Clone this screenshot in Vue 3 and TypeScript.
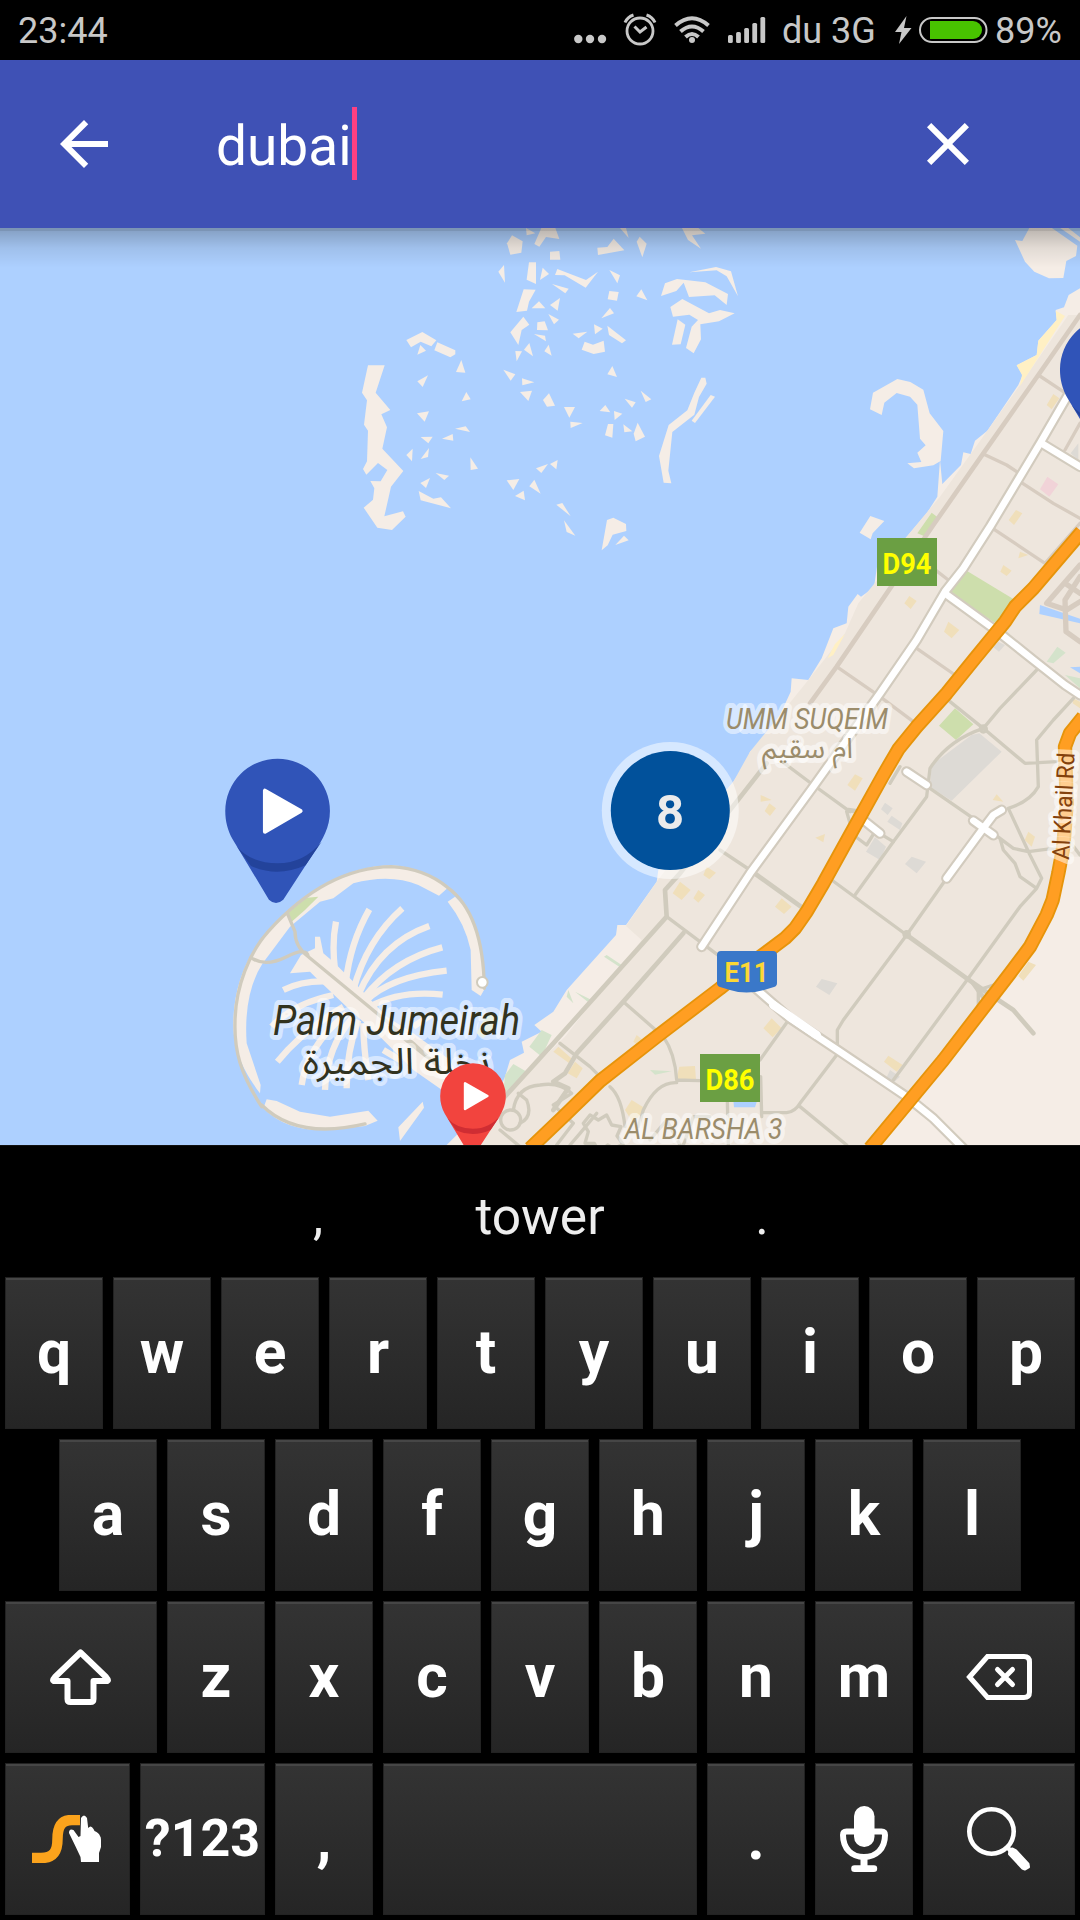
<script setup lang="ts">
interface Key {
  label?: string
  icon?: 'shift' | 'backspace' | 'swype' | 'mic' | 'search'
  size?: 'wide' | 'medium' | 'space'
  small?: boolean
}

const letters = (s: string): Key[] => s.split('').map((label) => ({ label }))

const rows: Key[][] = [
  letters('qwertyuiop'),
  letters('asdfghjkl'),
  [{ icon: 'shift', size: 'wide' }, ...letters('zxcvbnm'), { icon: 'backspace', size: 'wide' }],
  [
    { icon: 'swype', size: 'medium' },
    { label: '?123', size: 'medium', small: true },
    { label: ',' },
    { size: 'space' },
    { label: '.' },
    { icon: 'mic' },
    { icon: 'search', size: 'wide' },
  ],
]

const suggestions = [',', 'tower', '.']

// Small islets of the archipelago, one point list each
const islets: string[] = [
  '516,46 548,64 544,98 511,104 501,70', '558,24 586,40 560,46', '604,24 646,24 658,57 618,51 598,80 583,72',
  '630,95 658,93 661,119 630,119', '492,135 495,188 475,155', '567,127 588,127 588,192 560,179',
  '608,143 627,162 600,180', '652,147 738,180 774,155 737,203 674,166 645,165', '772,83 802,81 821,56 853,91 774,105',
  '840,24 858,24 866,54', '899,50 920,71 907,112 890,65', '1026,24 1075,24 1096,41 1056,46 1083,86 1044,60',
  '808,150 840,166 832,190', '636,192 686,206 676,220', '551,208 587,209 567,245 561,272 529,276',
  '597,244 616,265 575,265', '660,234 653,272 630,255', '808,213 836,216 831,242 803,238', '904,208 922,241 889,229',
  '810,264 822,280 784,295', '625,282 657,299 642,313', '550,290 568,314 545,330 535,375 511,337',
  '592,307 614,304 624,331 591,330', '582,342 615,347 618,364', '762,313 788,326 765,343', '802,317 858,361 846,370 807,345',
  '698,341 742,335 716,355', '734,365 759,374 791,362 795,395 761,402 725,389', '568,369 579,409 552,389',
  '526,393 546,394 530,424', '626,374 635,407 613,394', '490,449 526,463 512,482', '546,475 583,487 547,496',
  '540,516 576,512 565,543', '627,520 645,557 621,560 609,540', '817,438 831,471 802,463', '672,561 705,561 688,593',
  '691,605 728,609 692,624', '796,555 811,577 779,573', '822,573 847,581 824,600', '854,536 887,547 876,563',
  '902,512 934,538 917,546', '804,612 820,612 817,653 795,646', '850,613 877,634 853,637', '893,608 915,650 887,664 881,641',
  '653,720 649,748 630,732', '624,732 604,759 588,745', '500,781 538,777 520,810', '583,779 602,821 568,799',
  '551,812 555,841 525,828', '649,854 667,849 692,889', '672,901 706,947 680,936', '801,900 820,893 858,912 859,933 818,944 803,976 785,991',
  '852,947 866,961 826,975', '199,360 247,336 289,361 274,379 242,365 213,382', '292,367 346,391 346,403 331,412 283,391',
  '241,375 258,392 232,404', '364,420 376,458 348,456', '264,466 248,501 232,484', '379,516 392,538 365,544',
  '231,580 267,574 254,605', '242,651 278,650 265,670', '338,642 340,662 306,656', '345,626 377,619 390,636',
  '218,686 216,724 199,705', '267,684 264,711 242,717', '391,712 414,746 392,750', '270,774 258,804 241,789',
  '287,759 327,767 313,780', '236,813 280,836 303,832 333,865 242,841',
  '84,436 134,436 107,518 151,570 124,583 141,622 127,686 190,753 153,800 133,889 189,874 197,890 156,930 112,923 71,863 99,839 103,805 91,783 122,784 142,750 114,729 79,764 69,747 81,724 84,632 72,614 81,541 66,518',
  '975,190 1011,177 1096,187 1164,222 1160,255 1124,226 1047,231 1031,188 1009,213 963,228',
  '1048,157 1128,141 1173,154 1194,229 1160,169 1130,151', '991,261 1027,237 1107,280 1140,270 1184,280 1137,304 1081,313 1083,358 1061,400 1038,384 1055,320 1074,300 1048,284 999,290',
  '1013,298 1036,314 1022,373 996,374', '1084,473 1096,473 1100,491 1077,531 1063,584 997,636 985,752 994,790 971,788 957,708 986,615 1042,571 1063,518',
  '1112,525 1125,530 1065,609 1055,602',
]
</script>

<template>
  <div class="phone">
    <header class="status">
      <span class="clock">23:44</span>
      <svg class="dots" width="34" height="60" viewBox="573 0 34 60"><circle cx="578.3" cy="39" r="4.2" /><circle cx="590" cy="39" r="4.2" /><circle cx="602" cy="39" r="4.2" /></svg>
      <svg class="alarm" width="34" height="60" viewBox="623 0 34 60" fill="none" stroke="#c8c8c8">
        <circle cx="640" cy="31" r="13" stroke-width="2.8" /><path d="M634.500 26.500l5.500 5.500 6.500-5" stroke-width="3" /><path d="M625 22.500q2.500-5.500 8.500-7.500M655 22.500q-2.500-5.500-8.500-7.500" stroke-width="3" />
      </svg>
      <svg class="wifi" width="38" height="60" viewBox="673 0 38 60" fill="none" stroke="#c8c8c8" stroke-width="4">
        <path d="M675.500 25.500q16.500-14.500 33 0M680.500 31.500q11.500-10 23 0M685.500 37q6.500-6 13 0" /><circle cx="692" cy="40" r="3" fill="#c8c8c8" stroke="none" />
      </svg>
      <svg class="signal" width="38" height="60" viewBox="728 0 38 60"><rect v-for="(h, i) in [8, 11, 15, 20, 26]" :key="i" :x="728 + i * 8.1" :y="43 - h" width="4.800" :height="h" rx="1.500" /></svg>
      <span class="carrier">du 3G</span>
      <svg class="bolt" width="18" height="60" viewBox="894 0 18 60"><path d="M906.500 16L895 32h6.500l-2.500 12L911.500 28H904z" /></svg>
      <svg class="battery" width="70" height="60" viewBox="918 0 70 60"><rect x="920" y="18" width="66.500" height="24" rx="12" fill="none" stroke="#c8c8c8" stroke-width="2" /><path d="M930 21h43a9 9 0 0 1 0 18h-43z" fill="#48c400" /></svg>
      <span class="percent">89%</span>
    </header>

    <div class="search-bar">
      <svg width="72" height="72" viewBox="0 0 24 24" fill="#fff"><path d="M20 11H7.830l5.590-5.590L12 4l-8 8 8 8 1.410-1.410L7.830 13H20z" /></svg>
      <div class="query"><span>dubai</span><i class="caret"></i></div>
      <svg width="72" height="72" viewBox="0 0 24 24" fill="#fff"><path d="M19 6.410L17.590 5 12 10.590 6.410 5 5 6.410 10.590 12 5 17.590 6.410 19 12 13.410 17.590 19 19 17.590 13.410 12z" /></svg>
    </div>

    <main class="map">
      <svg class="canvas" width="1080" height="917" viewBox="0 228 1080 917">
        <defs>
          <g id="pin">
            <path d="M-157 0A157 157 0 0 1 157 0C157 50 135 86 110 123L17 266Q-5 286-26 266L-135 85C-150 58-157 30-157 0z" />
          </g>
        </defs>
        <!-- The World islands -->
        <g transform="translate(340 220) scale(.33333)" class="sand"><polygon v-for="p in islets" :key="p" :points="p" /></g>

        <!-- Mainland -->
        <g transform="translate(700 660) scale(.33333)">
          <g class="sand">
            <path d="M1140-1115L1106-1095 1092-1058 1067-1050 1070-1020 1015-958 1010-915 950-884 968-855 955-825 862-688 825-658 812-618 790-623 783-585 727-528 720-600 712-490 680-440 620-370 531-280 522-218 483-190 473-198 445-160 440-110 400-95 365-5 325 60 275 55 272 95 240 165 195 235 150 275 140 305 100 365-125 630-130 665-222 795-248 795-252 825-400 990-440 1055-497 1095-475 1115-535 1145-528 1178-570 1200-585 1250-620 1330-730 1425-765 1460H1140z" />
            <path d="M990-1300L967-1257 945-1260 975-1195 1003-1165 1047-1145 1090-1146 1099-1197 1128-1212 1132-1243 1050-1300zM1075-1300L1140-1255V-1268L1100-1300z" />
            <path d="M519-802L592-843 631-834 670-811 689-740 730-687 722-597 700-584 642-575 622-590 664-594 652-622 677-644 660-664 652-766 630-790 590-801 553-772 545-735 510-752zM511-432L553-417 518-380 512-362 479-382z" />
          </g>
          <path fill="#eee6dd" d="M1140-1035H1105L960-825 862-688 720-490 620-370 540-250 475-170 435-80 325 60 240 165 150 275 100 365-50 560-130 665-222 798-175 840-405 1130-580 1300-640 1390-700 1460H530L930 940 1058 720 1098 590 1140 590z" />
          <g fill="#fff0c4"><path d="M1067-1048L1095-1032 960-822 966-855 950-884 1010-915 1015-958 1070-1020zM435-78L400-15 383-5 405-48z" /></g>
          <g fill="#cddeac"><path d="M800-268L945-180 895-105 750-200zM695-442L715-427 677-370 652-380zM765 145L820 193 768 240 717 197z" /></g>
          <g fill="#d4e3cb"><path d="M1072-40L1097-22 1060 10 1040 5zM1095 45L1140 55V85zM-280 885L-235 915-240 922-288 890zM-395 990L-380 1030-400 1010zM-375 995L-325 1020-335 1027zM-475 1110L-445 1125-475 1190-512 1160zM-560 1212L-520 1235-560 1285-590 1300-585 1245zM-150 1230L-85 1234-135 1244z" /></g>
          <g fill="#add0ff"><path d="M1020-165L1140-124V-110L1018-138zM1110 22L1140 20V40zM100 1320H172L165 1342H102z" /></g>
          <g fill="#dddad5"><path d="M815 225L838 220 905 275 755 422 690 380 695 315zM555 428L578 445 563 465 543 448zM575 467L607 490 600 510 562 485zM525 532L558 560 540 600 498 575zM635 590L678 605 650 640 615 612zM365 957L412 970 388 1005 348 980zM1135-650V-600L1112-620zM895-55L915-45 897-25 880-38zM570 1230L600 1250 580 1268 560 1252z" /></g>
          <g fill="#f1d3d8"><path d="M1042-550L1075-527 1048-490 1020-512z" /></g>
          <g fill="#f0dfba"><path d="M1060-798L1078-785 1055-752 1040-765zM948-450L967-440 942-405 926-420zM960-325L985-315 955-305zM910-285L935-268 920-252 901-265zM628-192L650-177 632-153 613-170zM745-115L778-90 755-65 732-85zM465 343L488 355 465 392 442 375zM182 405L215 420 182 425zM208 430L228 445 210 468 194 453zM375 522L370 547 346 533zM890 403L910 425 878 420zM985 515L1005 530 995 560 974 540zM1120 115L1140 125V145L1118 130zM20 620L48 638 28 658 10 645zM245 715L275 740 252 762 225 740zM-60 665L-28 690-55 720-82 700zM-5 690L15 705-5 728-20 715zM215 1075L245 1105 218 1132 190 1105zM565 1187L608 1215 590 1235 552 1205zM985 905L1008 915 970 962 955 948zM-62 1220L-15 1218-12 1260-72 1260zM-205 1320L-165 1345-200 1390-225 1350zM-190 1125L-165 1145-180 1160-200 1145zM-425 1160L-380 1200-385 1215-440 1175zM-375 1205L-352 1225-370 1255-397 1240z" /></g>

          <g class="minor north">
            <path stroke-width="14" d="M1140-1035L1015-855 850-620 700-405 560-200 410 20 330 130" />
            <path d="M1015-855L1090-805M850-618L920-585 950-565M960-535L1060-470 1140-425M870-400L990-320 1035-290 1140-410M700-275L745-240M1140-710L1095-630M410 20L540 110 640 185M650-35L765 45" />
            <path stroke-width="16" d="M1140-285L1040-170 1100-150 1140-175M1140-250L1095-180 1098-85 1140-55M1095-230L1140-200" />
          </g>
          <g class="minor">
            <path stroke-width="14" d="M200 310L110 425-60 640-105 690-100 770-440 1150-640 1370-690 1455" />
            <path stroke-width="14" d="M-50 820L-120 900-230 1025-370 1180-405 1240-440 1265-395 1285-440 1350" />
            <path d="M-100 770L60 890M60 570L150 630M240 300L340 375 450 455M530 515L580 545 465 705M440 455L460 525 500 555 525 515M600 320L570 370" />
            <path stroke-width="14" d="M150 630L310 745M820 970L870 1040M445 450L475 455" />
            <path d="M750 125L850 205 975 310 1070 305M1010 30L900 145 850 205Q745 240 690 325L680 410 580 545M690 385L820 475 940 565 985 575 1060 565 1110 545 1140 585M1120 115L1060 180 1010 240 1015 380Q990 425 925 445L990 585 1025 655 1010 685 960 650 945 610 910 570 900 535M1010 685L960 740 805 955 580 1260M395 660L620 825" />
            <path stroke-width="14" d="M620 825L800 955 850 990 940 1050 1000 1120" />
            <path d="M835 1040V990L880 975M740 655L620 825 430 1080 412 1110V1170M410 1185L300 1330Q285 1355 260 1358H190M300 1340L440 1455M262 1085L180 1200M82 1320L85 1455M182 1250L185 1370M-230 1025L-110 1130Q-75 1180-70 1260L0 1262M-70 1268Q-130 1265-170 1350L-185 1400M-270 1280Q-235 1310-225 1400M-420 1150L-330 1220-300 1250" />
            <circle cx="-568" cy="1380" r="30" /><circle cx="620" cy="823" r="8" /><circle cx="850" cy="207" r="9" />
            <path d="M-560 1350Q-550 1280-480 1275-420 1265-385 1300L-440 1335-380 1390-430 1455M-600 1410L-540 1460M-540 1390Q-500 1370-520 1320L-545 1300M-330 1365l25 15 25-15 15 30 28 5-12 28 18 25-28 12-18-10-25 20-15-25-28 0 10-35-15-25zM-310 1360L-360 1420-390 1455M-150 1440L-100 1380-60 1455M-50 1455L-20 1370H30" />
          </g>
          <g class="casing">
            <path d="M1110-805L1020-650 960-550 870-400 790-275 735-205 650-60 540 100 340 380 150 640 5 860" />
            <path d="M1025-650L1140-580M735-200L900-80 1000 0 1095 75 1140 105M620 335L680 375M490 480L540 520M820 482L880 525M740 655L850 505 880 465 905 450M150 970L270 1075 420 1175 620 1310 700 1375 790 1465" />
          </g>
          <g class="white">
            <path d="M1110-805L1020-650 960-550 870-400 790-275 735-205 650-60 540 100 340 380 150 640 5 860" />
            <path d="M1025-650L1140-580M735-200L900-80 1000 0 1095 75 1140 105M620 335L680 375M490 480L540 520M820 482L880 525M740 655L850 505 880 465 905 450M150 970L270 1075 420 1175 620 1310 700 1375 790 1465" />
            <path stroke-width="26" d="M220 1035L350 1125" />
          </g>
          <g class="highway">
            <path class="edge" d="M1145-385L1000-215 945-160 915-115 825-5 740 100 650 200 595 268 550 345 450 525 370 670 320 755 285 805 255 835 195 880 140 920 60 985-130 1130-300 1263-410 1370-510 1465" />
            <path class="edge" d="M1150 170L1110 220 1095 260 1100 430 1090 560 1075 640 1058 720 1040 765 990 860 930 940 730 1200 510 1465" />
            <path d="M1145-385L1000-215 945-160 915-115 825-5 740 100 650 200 595 268 550 345 450 525 370 670 320 755 285 805 255 835 195 880 140 920 60 985-130 1130-300 1263-410 1370-510 1465" />
            <path d="M1150 170L1110 220 1095 260 1100 430 1090 560 1075 640 1058 720 1040 765 990 860 930 940 730 1200 510 1465" />
          </g>
        </g>

        <!-- Palm Jumeirah -->
        <g transform="translate(200 740) scale(.33333)">
          <g class="sand">
            <path d="M180 1060C120 980 100 920 100 850C100 740 145 635 205 572C310 455 430 380 575 376Q670 382 742 445L717 467 655 435Q570 400 460 430L400 475 360 485 270 560Q240 600 188 670 130 760 140 910L182 1035z" />
            <path d="M765 470Q850 540 855 745L842 768 815 750 812 630Q795 550 743 485zM200 1078L230 1083 300 1115 390 1130 505 1112 533 1142 495 1158 380 1170Q260 1175 190 1105zM668 1085L672 1103 600 1203 595 1162z" />
            <path d="M270 700L303 645 345 625V590H360L370 640 400 665 470 735 560 830 640 880 750 960 800 1060 740 1060 640 990 540 890 450 810 345 710 330 695z" />
          </g>
          <g class="fronds">
            <path d="M408 545Q395 610 405 690M508 508Q450 610 437 730M607 505Q500 600 460 750M688 558Q540 610 475 765M727 622Q580 660 490 775M740 692Q570 710 495 785M728 764Q600 750 510 800M250 750Q310 720 390 725M215 860Q280 790 400 765M232 965Q310 870 430 800M305 1035Q320 920 440 820M375 1050Q380 920 460 830M440 1045Q440 930 475 840M505 1020Q490 920 490 850M640 860L700 820M550 930L600 960" />
          </g>
          <path fill="#cddeac" d="M320 473L355 470 315 510 275 545 260 520z" />
          <g class="minor">
            <path d="M185 1100C120 1000 103 930 105 850C105 740 150 635 205 574C310 458 430 382 575 380Q675 386 742 442Q850 520 853 745M185 1095Q290 1200 495 1152M160 657Q200 680 260 650T325 650M262 520L285 575Q285 620 325 650M325 650L640 910 720 985M580 870L680 950" />
          </g>
          <circle cx="847" cy="727" r="16" fill="#fff" stroke="#d0cbbd" stroke-width="6" />
          <path fill="#d4e3cb" d="M860 820L910 830 850 895 830 880zM830 910L820 905" />
          <path stroke="#fff" stroke-width="22" stroke-linecap="round" d="M575 888L620 890" opacity=".8" />
        </g>

        <g class="labels">
          <text class="area" x="726" y="729" textLength="162" lengthAdjust="spacingAndGlyphs">UMM SUQEIM</text>
          <text class="area arabic" x="762" y="758" textLength="91" lengthAdjust="spacingAndGlyphs">ام سقيم</text>
          <text class="area" x="624.500" y="1139" textLength="158" lengthAdjust="spacingAndGlyphs">AL BARSHA 3</text>
          <text class="palm" x="273" y="1035" textLength="247" lengthAdjust="spacingAndGlyphs">Palm Jumeirah</text>
          <text class="palm arabic" x="303" y="1074" textLength="187" lengthAdjust="spacingAndGlyphs">نخلة الجميرة</text>
          <text class="road" transform="translate(1069 860) rotate(-87)" textLength="107" lengthAdjust="spacingAndGlyphs">Al Khail Rd</text>
        </g>

        <g class="shields">
          <rect x="877" y="538" width="60" height="48" fill="#6b9f43" /><text x="907" y="574" textLength="49" lengthAdjust="spacingAndGlyphs">D94</text>
          <rect x="700" y="1054" width="60" height="48" fill="#6b9f43" /><text x="730" y="1090" textLength="49" lengthAdjust="spacingAndGlyphs">D86</text>
          <path fill="#3a78c9" d="M721 951h52q4 0 4 4v28q0 3-3 4l-10 3q-18 5-34 0l-10-3q-3-1-3-4v-28q0-4 4-4z" /><text class="e11" x="746.500" y="981.500" textLength="44" lengthAdjust="spacingAndGlyphs">E11</text>
        </g>

        <circle cx="670.300" cy="810.500" r="68.500" fill="#fff" fill-opacity=".5" />
        <circle cx="670.300" cy="810.500" r="59.500" fill="#01519b" />
        <text class="count" x="670" y="829">8</text>

        <g transform="translate(277.600 811) scale(.33333)">
          <use href="#pin" fill="#3054b8" />
          <path fill="#23439b" d="M-122 107Q-80 156 0 157 80 156 132 92L84 163Q0 200-80 165z" />
          <path fill="#fff" stroke="#fff" stroke-width="12" stroke-linejoin="round" d="M-38-61V62L69 0z" />
        </g>
        <g transform="translate(1112.300 369.500) scale(.33333)"><use href="#pin" fill="#3054b8" /><path fill="#23439b" d="M-122 107Q-80 156 0 157 80 156 132 92L84 163Q0 200-80 165z" /></g>
        <g transform="translate(473 1096) scale(.209)">
          <use href="#pin" fill="#f2443e" />
          <path fill="#cf2d33" d="M-122 107Q-80 156 0 157 80 156 132 92L84 163Q0 200-80 165z" />
          <path fill="#fff" stroke="#fff" stroke-width="12" stroke-linejoin="round" d="M-38-61V62L69 0z" />
        </g>
      </svg>
      <div class="shade"></div>
    </main>

    <section class="keyboard">
      <div class="suggestions"><span v-for="s in suggestions" :key="s">{{ s }}</span></div>
      <div v-for="(row, r) in rows" :key="r" class="row">
        <div v-for="(k, i) in row" :key="i" class="key" :class="[k.size, { small: k.small }]">
          <template v-if="k.label">{{ k.label }}</template>
          <svg v-else-if="k.icon === 'shift'" width="62" height="56" viewBox="0 0 62 56" fill="none" stroke="#fff" stroke-width="6" stroke-linejoin="round"><path d="M30.500 3.500L56 28Q60 32.500 56 32H43.500V50q0 3-3 3h-20q-3 0-3-3V32H5Q1 32.500 5 28z" /></svg>
          <svg v-else-if="k.icon === 'backspace'" width="66" height="46" fill="none" stroke="#fff" stroke-width="5"><path d="M3.500 23L21.500 2.500H58q5.500 0 5.500 5.500v30q0 5.500-5.500 5.500H21.500z" /><path d="M31.500 15.500l15 15m0-15l-15 15" stroke-linecap="round" /></svg>
          <svg v-else-if="k.icon === 'swype'" width="71" height="48"><path d="M0 43H9C22 43 25.500 36 25.500 24S29 5 40 5h8" fill="none" stroke="#fba31c" stroke-width="10.500" /><path fill="#fff" d="M49 3q3-5 6 0l1.200 10Q59 9.500 61.500 14l1 2Q67 18 68 21q1 1 1 4v7l-2 6v9H49l-.5-5-4.700-10L37 18q0-5 4.500-3l5 7 2-1z" /></svg>
          <svg v-else-if="k.icon === 'mic'" width="48" height="66" fill="#fff"><rect x="14" width="20.500" height="41" rx="10.200" /><path d="M15 25.500H6.500Q3 25.500 3 29C3 43 12 51 24 51s21-8 21-22q0-3.500-3.500-3.500H33" fill="none" stroke="#fff" stroke-width="6" /><path d="M20.500 51h7v9h-7z" /><rect x="11.200" y="59.300" width="26" height="6.700" rx="3.300" /></svg>
          <svg v-else-if="k.icon === 'search'" width="64" height="64" fill="none" stroke="#fff"><circle cx="24.500" cy="24.500" r="22.200" stroke-width="4.600" /><path d="M39 39l6 6" stroke-width="4.500" /><path d="M45.500 42L48.500 43.500 61 57 61.500 60 58 62 55.500 61 42.500 47 43 43z" fill="#fff" stroke-width="3" stroke-linejoin="round" /></svg>
        </div>
      </div>
    </section>
  </div>
</template>

<style>
body {
  margin: 0;
  background: #000;
}
</style>

<style scoped>
.phone {
  width: 1080px;
  height: 1920px;
  display: flex;
  flex-direction: column;
  overflow: hidden;
  background: #000;
  font-family: Roboto, "Noto Sans", sans-serif;
}
svg {
  display: block;
  flex: none;
}
.status {
  height: 60px;
  display: flex;
  align-items: center;
  color: #c8c8c8;
  fill: #c8c8c8;
  font-size: 36px;
  line-height: 60px;
}
.status span { padding-top: 2px; }
.clock {
  width: 555px;
  padding-left: 18px;
}
.alarm { margin-left: 16px; }
.wifi { margin-left: 16px; }
.signal { margin-left: 17px; }
.carrier { width: 95px; margin-left: 16px; white-space: nowrap; }
.bolt { margin-left: 17px; }
.battery { margin-left: 6px; }
.percent { margin-left: 7px; }
.search-bar {
  height: 168px;
  padding: 0 96px 0 48px;
  display: flex;
  align-items: center;
  background: #3f51b5;
}
.query {
  flex: 1;
  display: flex;
  align-items: center;
  height: 73px;
  margin: -1px 0 0 96px;
  color: #fff;
  font-size: 55px;
  line-height: 73px;
}
.query span { padding-top: 5px; }
.caret {
  width: 5px;
  height: 73px;
  background: #ff4081;
}
.map {
  position: relative;
  height: 917px;
  background: #add0ff;
  overflow: hidden;
}
.shade {
  position: absolute;
  inset: 0 0 auto;
  height: 40px;
  background: linear-gradient(rgba(0, 0, 0, 0.29) 3px, rgba(0, 0, 0, 0.22) 3px, rgba(0, 0, 0, 0.08) 50%, transparent);
}
.sand { fill: #f5ede6; }
.fronds {
  fill: none;
  stroke: #f5ede6;
  stroke-width: 19;
}
.minor {
  fill: none;
  stroke: #d0cbbd;
  stroke-width: 10;
  stroke-linejoin: round;
  stroke-linecap: round;
}
.north { stroke: #d7ccc0; }
.casing,
.white {
  fill: none;
  stroke: #d2cbbe;
  stroke-width: 33;
  stroke-linejoin: round;
  stroke-linecap: round;
}
.white {
  stroke: #fff;
  stroke-width: 20;
}
.highway {
  fill: none;
  stroke: #ff9e22;
  stroke-width: 32;
  stroke-linejoin: round;
}
.edge {
  stroke: #e6940b;
  stroke-width: 43;
}
.labels text {
  paint-order: stroke;
  stroke: rgba(255, 255, 255, 0.52);
  stroke-width: 10px;
  stroke-linejoin: round;
}
.area {
  fill: #9b8c6b;
  font-size: 30px;
  font-style: italic;
}
.palm {
  fill: #32331f;
  font-size: 42px;
  font-style: italic;
}
.labels .arabic {
  font-family: "Noto Sans Arabic", "DejaVu Sans", sans-serif;
  font-style: normal;
  font-size: 28px;
}
.labels .palm.arabic { font-size: 36px; }
.road {
  fill: #84410c;
  font-size: 24px;
}
.shields text {
  fill: #ffff00;
  font-size: 30px;
  font-weight: 700;
  text-anchor: middle;
}
.shields .e11 {
  fill: #fcd734;
  font-size: 28px;
}
.count {
  fill: #ebebeb;
  font-size: 49px;
  font-weight: 700;
  text-anchor: middle;
}
.keyboard {
  display: flex;
  flex-direction: column;
  gap: 10px;
}
.suggestions {
  height: 121px;
  border-top: 1px solid #111;
  display: flex;
  justify-content: center;
  color: #eee;
  font-size: 51.5px;
  line-height: 142px;
}
.suggestions span {
  width: 222px;
  text-align: center;
}
.row {
  display: flex;
  justify-content: center;
  gap: 10px;
}
.key {
  box-sizing: border-box;
  width: 98px;
  height: 152px;
  display: flex;
  align-items: center;
  justify-content: center;
  border: 1px solid #222;
  color: #fff;
  font-size: 60.5px;
  font-weight: 700;
  line-height: 58px;
  background: linear-gradient(#464646 2px, #333 2px, #252525);
}
.wide { width: 152px; }
.medium { width: 125px; }
.space { width: 314px; }
.small { font-size: 52px; }
</style>
